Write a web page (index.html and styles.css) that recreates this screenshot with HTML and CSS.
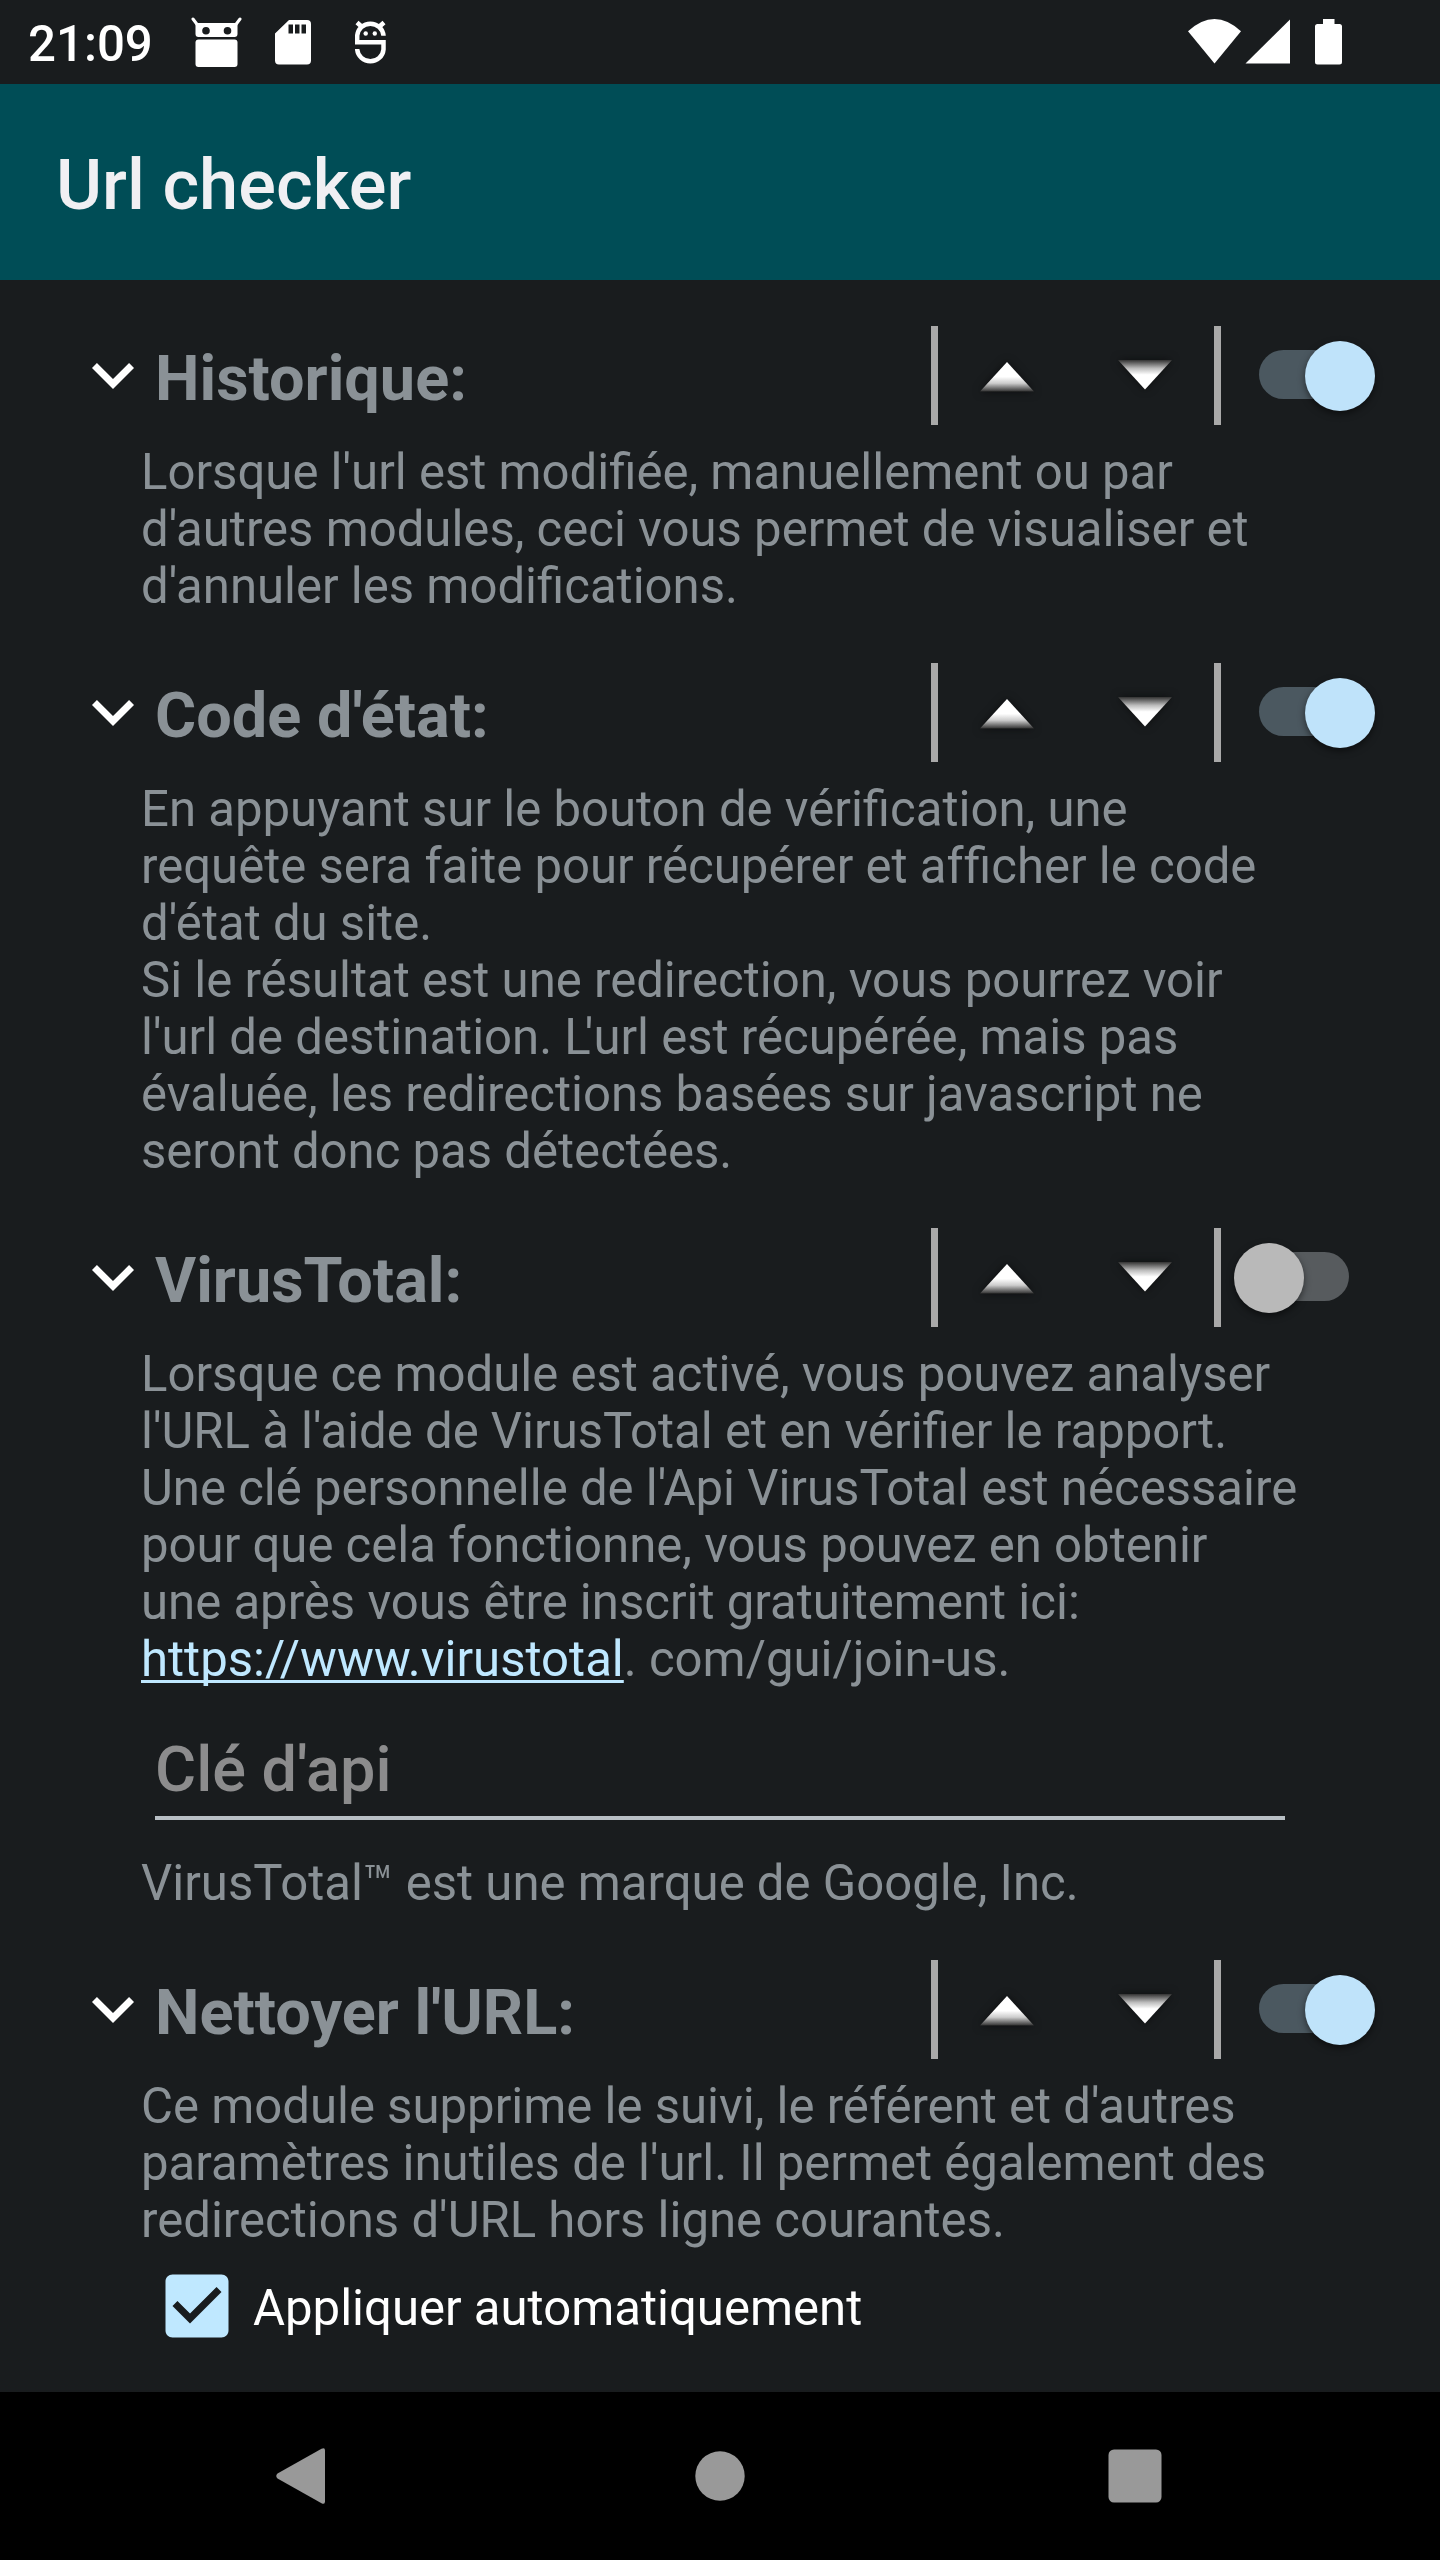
FILE: index.html
```html
<!DOCTYPE html>
<html lang="fr">
<head>
<meta charset="utf-8">
<title>Url checker</title>
<link rel="stylesheet" href="styles.css">
</head>
<body>
<svg class="defs" width="0" height="0">
  <defs>
    <linearGradient id="fadeUp" x1="0" y1="0" x2="0" y2="1"><stop offset=".5" stop-color="#fff"/><stop offset=".72" stop-color="#ccc"/><stop offset="1" stop-color="#333"/></linearGradient>
    <linearGradient id="fadeDown" x1="0" y1="0" x2="0" y2="1"><stop offset="0" stop-color="#333"/><stop offset=".28" stop-color="#bbb"/><stop offset=".5" stop-color="#fff"/></linearGradient>
    <symbol id="chevron" viewBox="0 0 24 24"><path fill="#fff" d="M16.59 8.59 12 13.17 7.41 8.59 6 10l6 6 6-6z"/></symbol>
    <symbol id="up" viewBox="0 0 54 36"><path fill="url(#fadeUp)" d="M27 4 54 33.5H0z"/></symbol>
    <symbol id="down" viewBox="0 0 54 36"><path fill="url(#fadeDown)" d="M27 31.5 54 2H0z"/></symbol>
  </defs>
</svg>
<header class="status">
  <span class="clock">21:09</span>
  <svg class="ic-droid" viewBox="0 0 52 52" width="52" height="52"><path d="M2 2 6.500 8" stroke="#fff" stroke-width="3" stroke-linecap="round"/><path d="M49 2 44.500 8" stroke="#fff" stroke-width="3" stroke-linecap="round"/><path fill="#fff" fill-rule="evenodd" d="M4.500 6H46.500V17a3 3 0 0 1-3 3H7.500a3 3 0 0 1-3-3zM15 10a3.800 3.800 0 1 0 0 7.600 3.800 3.800 0 0 0 0-7.600zM36.500 10a3.800 3.800 0 1 0 0 7.600 3.800 3.800 0 0 0 0-7.600z"/><rect x="4.500" y="22.500" width="42" height="27.500" rx="3" fill="#fff"/></svg>
  <svg class="ic-sd" viewBox="0 0 36 45" width="36" height="45"><path fill="#fff" fill-rule="evenodd" d="M14 0H32a4 4 0 0 1 4 4V40.500a4 4 0 0 1-4 4H4a4 4 0 0 1-4-4V13.500zM13.500 4.500V13.500H18V4.500zM20 4.500V13.500H24.500V4.500zM26.500 4.500V13.500H31V4.500z"/></svg>
  <svg class="ic-s" viewBox="0 0 32 46" width="32" height="46" fill="none" stroke="#fff" stroke-width="4.500"><path d="M28.500 15.700V15.500A13.200 13 0 0 0 2.200 15.500V22.300H28.500V29.500A13.200 13 0 0 1 2.200 29.500V29"/><path d="M2 2.500 7 7M29 2.500 24 7"/><circle cx="10.700" cy="13.500" r="2.200" fill="#fff" stroke="none"/><circle cx="19.800" cy="13.500" r="2.200" fill="#fff" stroke="none"/></svg>
  <span class="spacer"></span>
  <svg class="ic-net" viewBox="0 0 154 46" width="154" height="46" fill="#fff"><path d="M0 12.300Q26.500-12.300 53 12.300L26.500 44.500z"/><path d="M102 .5V44.500H57.500z"/><path d="M135 0H146.500V5H151.500a2.500 2.500 0 0 1 2.500 2.500V43a2.500 2.500 0 0 1-2.500 2.500H129.500A2.500 2.500 0 0 1 127 43V7.500A2.500 2.500 0 0 1 129.500 5H135z"/></svg>
</header>
<div class="appbar"><h1>Url checker</h1></div>
<main>
  <section>
    <div class="head"><svg class="chev"><use href="#chevron"/></svg><h2>Historique:</h2><i class="bar"></i><svg class="arrow"><use href="#up"/></svg><svg class="arrow"><use href="#down"/></svg><i class="bar"></i><span class="switch on"><b></b></span></div>
    <p>Lorsque l'url est modifiée, manuellement ou par<br>d'autres modules, ceci vous permet de visualiser et<br>d'annuler les modifications.</p>
  </section>
  <section>
    <div class="head"><svg class="chev"><use href="#chevron"/></svg><h2>Code d'état:</h2><i class="bar"></i><svg class="arrow"><use href="#up"/></svg><svg class="arrow"><use href="#down"/></svg><i class="bar"></i><span class="switch on"><b></b></span></div>
    <p>En appuyant sur le bouton de vérification, une<br>requête sera faite pour récupérer et <span class="loose">af</span>ficher le code<br>d'état du site.<br>Si le résultat est une redirection, vous pourrez voir<br>l'url de destination. <span class="kern">L</span>'url est récupérée, mais pas<br>évaluée, les redirections basées sur javascript ne<br>seront donc pas détectées.</p>
  </section>
  <section>
    <div class="head"><svg class="chev"><use href="#chevron"/></svg><h2>VirusTotal:</h2><i class="bar"></i><svg class="arrow"><use href="#up"/></svg><svg class="arrow"><use href="#down"/></svg><i class="bar"></i><span class="switch"><b></b></span></div>
    <p>Lorsque ce module est activé, vous pouvez analyser<br>l'URL à l'aide de VirusTotal et en vérifier le rapport.<br>Une clé personnelle de l'Api VirusTotal est nécessaire<br>pour que cela fonctionne, vous pouvez en obtenir<br>une après vous être inscrit gratuitement ici:<br><span class="link">https://www.virustotal</span>. com/gui/join-us.</p>
    <div class="field">Clé d'api</div>
    <p>VirusTotal™ est une marque de Google, Inc.</p>
  </section>
  <section>
    <div class="head"><svg class="chev"><use href="#chevron"/></svg><h2>Nettoyer l'URL:</h2><i class="bar"></i><svg class="arrow"><use href="#up"/></svg><svg class="arrow"><use href="#down"/></svg><i class="bar"></i><span class="switch on"><b></b></span></div>
    <p>Ce module supprime le suivi, le référent et d'autres<br>paramètres inutiles de l'url. Il permet également des<br>redirections d'URL hors ligne courantes.</p>
    <div class="check"><svg viewBox="0 0 24 24" width="84" height="84"><path fill="#bfe8ff" d="M19 3H5c-1.110 0-2 .9-2 2v14c0 1.100.89 2 2 2h14c1.110 0 2-.9 2-2V5c0-1.100-.89-2-2-2zm-9 14l-5-5 1.410-1.410L10 14.170l7.590-7.590L19 8l-9 9z"/></svg><span>Appliquer automatiquement</span></div>
  </section>
</main>
<nav>
  <svg viewBox="0 0 50 58" width="50" height="58"><path fill="#999" d="M45.500 1.700Q49 0 49 3.500V54.500Q49 58 45.500 56.300L1.500 31.500Q-1 29 1.500 26.500z"/></svg>
  <svg viewBox="0 0 50 50" width="50" height="50"><circle cx="25" cy="25" r="24.700" fill="#999"/></svg>
  <svg viewBox="0 0 54 54" width="54" height="54"><rect x=".5" y=".5" width="53" height="53" rx="5.500" fill="#999"/></svg>
</nav>
</body>
</html>
```
FILE: styles.css
```css
* { box-sizing: border-box; }
body { margin: 0; width: 1440px; height: 2560px; display: flex; flex-direction: column; overflow: hidden; background: #191c1e; color: #8a9196; font-family: Roboto, sans-serif; }
h1, h2, p { margin: 0; }
svg { display: block; flex: none; }
.status { height: 84px; flex: none; display: flex; align-items: flex-start; padding: 0 98px 0 28px; color: #fff; }
.clock { width: 163px; font-size: 49.200px; font-weight: 500; line-height: 58px; padding-top: 15px; }
.ic-droid { margin-top: 17px; }
.ic-sd { margin: 20px 0 0 32px; }
.ic-s { margin: 20px 0 0 44px; }
.spacer { flex: 1; }
.ic-net { margin-top: 19px; }
.appbar { height: 196px; flex: none; background: #004d56; padding: 60px 56px 0; display: flex; }
h1 { font-size: 70.400px; line-height: 82px; font-weight: 500; color: #f0f0f3; }
main { flex: 1; padding-top: 46px; display: flex; flex-direction: column; gap: 48px; }
.head { height: 118px; display: flex; align-items: flex-start; padding-left: 71px; }
.chev { width: 84px; height: 84px; margin-top: 7px; }
h2 { width: 776px; font-size: 63px; line-height: 74px; font-weight: 700; padding-top: 16px; }
.bar { width: 7px; height: 99px; background: #a9a9a9; }
.arrow { width: 54px; height: 36px; margin: 32px 42px 0; filter: drop-shadow(0 0 4px #0c0d0e); }
.arrow + .arrow { margin-left: 42px; }
.switch { width: 90px; height: 49px; margin: 24px 0 0 38px; border-radius: 25px; background: #575b5e; display: flex; align-items: center; }
.switch b { flex: none; width: 70px; height: 70px; margin-left: -25.500px; border-radius: 50%; background: #b9b9b9; box-shadow: 0 3px 7px rgba(0,0,0,.5); transform: translateY(1px); }
.switch.on { background: #4b5860; }
.switch.on b { margin-left: 45.500px; background: #bfe3fa; }
p { padding-left: 141px; font-size: 49.100px; line-height: 57px; white-space: nowrap; }
.kern { letter-spacing: -6px; }
.loose { margin-right: .5px; }
.link { color: #bfe8ff; text-decoration: underline; text-decoration-thickness: 3px; text-underline-offset: 4px; text-decoration-skip-ink: none; }
.field { width: 1130px; height: 132px; margin: 0 0 34px 155px; padding-top: 45px; border-bottom: 4px solid #b8bfc4; color: #8c8c8d; font-size: 63px; line-height: 74px; font-weight: 500; }
.field + p { padding-top: 1px; }
.check { display: flex; align-items: center; gap: 14px; padding-left: 155px; margin-top: 15px; color: #fff; font-size: 49.100px; line-height: 57px; }
.check span { padding-top: 4px; }
nav { height: 168px; flex: none; background: #000; display: flex; align-items: center; justify-content: space-between; padding: 0 278px 0 276px; }
nav svg:nth-child(2) { margin-left: 6px; }
```
